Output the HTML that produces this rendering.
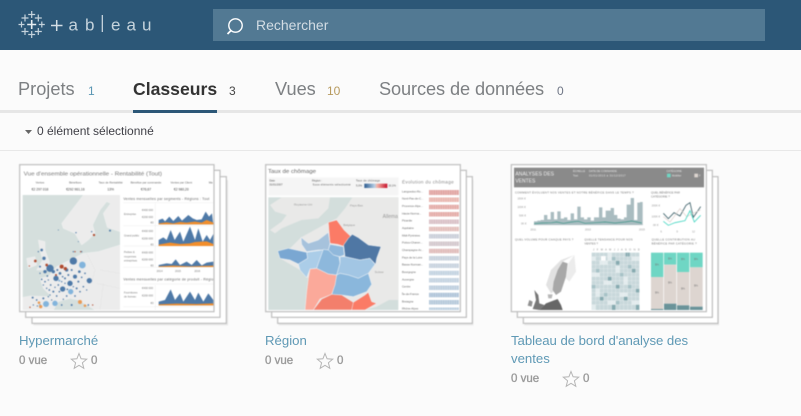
<!DOCTYPE html>
<html lang="fr"><head><meta charset="utf-8"><title>Classeurs</title>
<style>
html,body{margin:0;padding:0;background:#fbfbfb}
body{width:801px;height:416px;position:relative;overflow:hidden;font-family:"Liberation Sans",sans-serif}
.a{position:absolute;white-space:nowrap}
.tab{font-size:18.2px;color:#7d8083;top:78px;line-height:22px}
.n{font-size:12px;top:84px;line-height:14px}
.title{font-size:13.2px;color:#5f99b5;line-height:18px}
.st{font-size:11.5px;color:#9a9a9a;line-height:14px;-webkit-text-stroke:.35px #9a9a9a}
svg.th{position:absolute;top:160px;width:225px;height:170px;filter:blur(.4px)}
svg text{font-family:"Liberation Sans",sans-serif}
.c{fill:#fff;stroke:#bdbdbd;stroke-width:3.5}
.s{fill:#e8e8e8}
</style></head><body>
<div class="a" style="left:0;top:0;width:801px;height:50px;background:#2c5777"></div>
<svg class="a" style="left:0;top:0" width="170" height="50" viewBox="0 0 170 50">
<g stroke="#c5d3dc" fill="none" stroke-width="1.2">
<path d="M31.7 20v9M27.2 24.5h9" stroke="#e6edf1" stroke-width="1.6"/>
<path d="M31.7 11v7M28.2 14.5h7M31.7 31v7M28.2 34.5h7"/>
<path d="M25 14.500v7M21.5 18h7M38.300 14.500v7M34.800 18h7M25 28v7M21.5 31.500h7M38.300 28v7M34.800 31.500h7"/>
<path d="M21.500 21.500v6M18.500 24.500h6M41.800 21.500v6M38.800 24.500h6"/>
</g>
<path d="M51 25.500h11.500M56.700 20v11" stroke="#d3dee5" stroke-width="1.500" fill="none"/>
<path d="M102.300 15v17" stroke="#d3dee5" stroke-width="1.200" fill="none"/>
<g fill="#c5d3dc" font-size="17">
<text x="68.500" y="30.500">a</text><text x="85" y="30.500">b</text><text x="111" y="30.500">e</text><text x="126.500" y="30.500">a</text><text x="142" y="30.500">u</text>
</g></svg>
<div class="a" style="left:213px;top:9px;width:552px;height:32px;background:#527993"></div>
<svg class="a" style="left:225px;top:15px" width="22" height="22" viewBox="0 0 22 22" fill="none" stroke="#fff"><circle cx="10.500" cy="10.500" r="6.700" stroke-width="1.400"/><path d="M6 15.500L2.500 19" stroke-width="1.800"/></svg>
<div class="a" style="left:256px;top:16px;font-size:14px;line-height:18px;color:#d3dde4">Rechercher</div>

<div class="a tab" style="left:18px">Projets</div><div class="a n" style="left:88px;color:#5a96b3">1</div>
<div class="a tab" style="left:133px;color:#333;font-weight:700;font-size:17.6px">Classeurs</div><div class="a n" style="left:229px;color:#444">3</div>
<div class="a tab" style="left:275px">Vues</div><div class="a n" style="left:327px;color:#b79a5e">10</div>
<div class="a tab" style="left:379px;letter-spacing:-.1px">Sources de données</div><div class="a n" style="left:557px;color:#6e7585">0</div>
<div class="a" style="left:0;top:110px;width:801px;height:3px;background:#e6e6e6"></div>
<div class="a" style="left:133px;top:110px;width:84px;height:3px;background:#2c5777"></div>
<svg class="a" style="left:25px;top:129px" width="8" height="6"><path d="M0 1h7L3.500 5z" fill="#666"/></svg>
<div class="a" style="left:37px;top:123px;font-size:12px;line-height:16px;color:#3f3f46">0 élément sélectionné</div>
<div class="a" style="left:0;top:150px;width:801px;height:1px;background:#e8e8e8"></div>

<!-- Thumb 1 -->
<svg class="th" style="left:10px" viewBox="0 0 675 510">
<rect class="s" x="70" y="60" width="584" height="436"/><rect class="c" x="66" y="50" width="583" height="440"/>
<rect class="c" x="47" y="31" width="583" height="441"/><rect class="c" x="29" y="14" width="583" height="441"/>
<text x="41" y="47" font-size="17" fill="#777" textLength="415" lengthAdjust="spacingAndGlyphs">Vue d'ensemble opérationnelle - Rentabilité (Tout)</text>
<g font-size="8.500" fill="#666" text-anchor="middle"><text x="90" y="71">Ventes</text><text x="196" y="71">Bénéfices</text><text x="302" y="71">Taux de Rentabilité</text><text x="408" y="71">Bénéfice par commande</text><text x="514" y="71">Ventes par Client</text><text x="602" y="71">Ma</text></g>
<g font-size="10" fill="#444" text-anchor="middle"><text x="90" y="92">€2 297 018</text><text x="196" y="92">€292 961,16</text><text x="302" y="92">13%</text><text x="408" y="92">€76,67</text><text x="514" y="92">€2 980,20</text></g>
<g transform="translate(30 90)">
<rect x="8" y="15" width="292" height="345" fill="#d5dfdd"/>
<g fill="#ececec" stroke="#f8f8f8" stroke-width="1">
<path d="M190 15H300V125L262 112 250 70 272 40 260 35 240 60 218 105 225 130 205 150 185 165 165 130 130 115 125 100z"/>
<path d="M55 150L75 155 75 180 88 215 85 240 50 240 68 210 60 180z"/>
<path d="M20 205L45 200 50 225 25 235z"/>
<path d="M300 165L235 185 190 190 170 200 140 215 110 230 85 260 60 265 70 295 95 320 30 318 8 322V360H100L115 335 150 325 175 330 200 345 225 360H300z"/>
</g>
<path d="M240 240L300 250M230 280L300 295M200 190L225 240 215 280M250 280L240 360" stroke="#dedede" fill="none"/>
<g fill="#4e79a7">
<circle cx="90" cy="235" r="11"/><circle cx="160" cy="213" r="11"/><circle cx="108" cy="265" r="8"/><circle cx="208" cy="272" r="8"/><circle cx="165" cy="260" r="6"/><circle cx="150" cy="280" r="8"/><circle cx="128" cy="297" r="8"/><circle cx="65" cy="180" r="4"/><circle cx="72" cy="205" r="5"/><circle cx="270" cy="122" r="3"/><circle cx="75" cy="245" r="5"/><circle cx="140" cy="240" r="5"/><circle cx="120" cy="250" r="4"/><circle cx="178" cy="245" r="4"/><circle cx="100" cy="245" r="5"/><circle cx="60" cy="230" r="3"/><circle cx="38" cy="323" r="3"/>
<circle cx="65" cy="268" r="2.500"/><circle cx="75" cy="275" r="2.500"/><circle cx="85" cy="270" r="2"/><circle cx="92" cy="285" r="2.500"/><circle cx="80" cy="295" r="2"/><circle cx="100" cy="305" r="3"/><circle cx="115" cy="285" r="2.500"/><circle cx="135" cy="265" r="3"/><circle cx="145" cy="255" r="3"/><circle cx="125" cy="275" r="2"/><circle cx="175" cy="275" r="3"/><circle cx="190" cy="290" r="2.500"/><circle cx="170" cy="295" r="3"/><circle cx="185" cy="262" r="2.500"/><circle cx="110" cy="318" r="2.500"/><circle cx="85" cy="320" r="2"/><circle cx="140" cy="318" r="2.500"/><circle cx="165" cy="318" r="2.500"/><circle cx="70" cy="325" r="3"/><circle cx="50" cy="330" r="2.500"/><circle cx="95" cy="330" r="2"/><circle cx="155" cy="345" r="3"/><circle cx="205" cy="345" r="2.500"/><circle cx="130" cy="328" r="2"/><circle cx="40" cy="345" r="2"/><circle cx="115" cy="120" r="1.500"/><circle cx="168" cy="128" r="2"/><circle cx="215" cy="125" r="2"/><circle cx="160" cy="185" r="2"/><circle cx="185" cy="185" r="2"/><circle cx="175" cy="155" r="1.500"/><circle cx="55" cy="185" r="2"/><circle cx="200" cy="300" r="2"/>
<circle cx="70" cy="285" r="2"/><circle cx="88" cy="300" r="2.500"/><circle cx="105" cy="292" r="2"/><circle cx="118" cy="305" r="2.500"/><circle cx="142" cy="298" r="2.500"/><circle cx="160" cy="290" r="2"/><circle cx="180" cy="305" r="2.500"/><circle cx="135" cy="280" r="2"/><circle cx="128" cy="260" r="2.500"/><circle cx="155" cy="240" r="3"/><circle cx="112" cy="240" r="3"/><circle cx="82" cy="258" r="2.500"/><circle cx="60" cy="250" r="2"/><circle cx="195" cy="250" r="2.500"/><circle cx="125" cy="345" r="2.500"/><circle cx="52" cy="348" r="2"/><circle cx="90" cy="315" r="2"/></g>
<g fill="#82b4dc"><circle cx="187" cy="225" r="10"/><circle cx="152" cy="305" r="8"/><circle cx="105" cy="340" r="8"/><circle cx="78" cy="342" r="9"/><circle cx="118" cy="272" r="3"/><circle cx="60" cy="345" r="3"/></g>
<g fill="#b04a2e"><circle cx="125" cy="230" r="6"/><circle cx="136" cy="236" r="5"/><circle cx="80" cy="225" r="4"/><circle cx="46" cy="213" r="4"/><circle cx="222" cy="135" r="3.500"/><circle cx="30" cy="352" r="2"/><circle cx="108" cy="255" r="3"/><circle cx="165" cy="185" r="2"/><circle cx="182" cy="185" r="2"/><circle cx="28" cy="228" r="2"/><circle cx="218" cy="345" r="2"/></g>
<g fill="#e99a55"><circle cx="180" cy="336" r="6"/><circle cx="57" cy="338" r="4"/><circle cx="62" cy="350" r="5"/><circle cx="195" cy="347" r="4"/></g>
</g>
<g font-size="10.500" fill="#666"><text x="340" y="120" textLength="258">Ventes mensuelles par segments - Régions : Tout</text><text x="340" y="361" textLength="270">Ventes mensuelles par catégorie de produit - Régio</text></g>
<g stroke="#e2e2e2"><path d="M340 128H610M340 197H610M340 258H610M340 322H610M340 372H610M340 440H610" fill="none"/><path d="M436 130V320M436 375V450" fill="none"/></g>
<g font-size="8" fill="#777"><text x="342" y="165">Entreprise</text><text x="342" y="229">Grand public</text><text x="342" y="279">Petites &amp;</text><text x="342" y="292">moyennes</text><text x="342" y="304">entreprises</text><text x="342" y="400">Fournitures</text><text x="342" y="412">de bureau</text>
<text x="396" y="153">€400 000</text><text x="396" y="174">€200 000</text><text x="422" y="191">€0</text><text x="396" y="216">€400 000</text><text x="396" y="238">€200 000</text><text x="422" y="257">€0</text><text x="396" y="280">€400 000</text><text x="396" y="302">€200 000</text><text x="422" y="320">€0</text><text x="396" y="387">€400 000</text><text x="396" y="409">€200 000</text><text x="422" y="432">€0</text><text x="440" y="336">2014</text><text x="495" y="336">2015</text><text x="553" y="336">2016</text></g>
<g fill="#4e79a7">
<path d="M446 193V180L458 176 465 184 478 170 490 183 505 168 516 182 535 165 548 175 560 180 575 178 587 155 597 170 606 160 610 193z"/>
<path d="M446 258V240L460 232 470 240 482 210 494 240 510 215 520 245 540 200 555 240 565 205 578 245 590 225 600 240 610 222V258z"/>
<path d="M446 321V315L470 310 485 312 497 298 510 315 530 305 545 315 560 300 575 316 590 308 610 305V321z"/>
<path d="M446 436V425L465 420 482 388 495 420 510 400 520 425 540 395 555 420 565 398 580 425 595 400 610 420V436z"/></g>
<g fill="#f28e2b">
<path d="M446 193V190L470 187 490 190 510 186 530 188 555 185 575 188 590 180 610 188V193z"/>
<path d="M446 258V254L480 248 510 252 540 250 555 246 590 244 610 252V258z"/>
<path d="M446 321V319L490 317 540 319 610 317V321z"/>
<path d="M446 436V433L500 431 560 432 610 430V436z"/></g>
</svg>

<!-- Thumb 2 -->
<svg class="th" style="left:260px" viewBox="0 0 675 510">
<rect class="s" x="56" y="60" width="584" height="436"/><rect class="c" x="53" y="50" width="584" height="440"/>
<rect class="c" x="35" y="31" width="584" height="441"/><rect class="c" x="17" y="14" width="584" height="441"/>
<text x="24" y="39" font-size="17" fill="#666" textLength="144" lengthAdjust="spacingAndGlyphs">Taux de chômage</text>
<rect x="25" y="52" width="390" height="54" fill="#f5f5f5"/>
<g font-size="8" fill="#555"><text x="28" y="64">Date</text><text x="28" y="76">01/01/2007</text><text x="156" y="64">Région :</text><text x="158" y="76" textLength="114">Sous-éléments sélectionné</text><text x="288" y="65" textLength="72">Taux de chômage</text><text x="288" y="80">5,0%</text><text x="385" y="80">10,1%</text></g>
<defs><linearGradient id="g"><stop offset="0" stop-color="#2a5a8f"/><stop offset=".45" stop-color="#b8d0e6"/><stop offset=".55" stop-color="#f5b5a8"/><stop offset="1" stop-color="#c5102a"/></linearGradient>
<pattern id="b" width="7" height="14" patternUnits="userSpaceOnUse"><rect width="3" height="14" fill="#fff" fill-opacity=".25"/></pattern></defs>
<rect x="313" y="71" width="69" height="13" fill="url(#g)"/>
<g transform="translate(15 105)">
<rect x="10" y="7" width="390" height="338" fill="#d3dedc"/>
<path d="M262 7H400V315H372L335 335 300 345H120L130 250 105 225 45 190 108 127 190 82 215 70 240 40z" fill="#e9e9e8"/>
<path d="M50 7H195L190 40 160 70 110 75 85 85 50 100 30 115 15 105 50 80 65 60 30 50 15 30z" fill="#e9e9e8"/>
<g font-size="9" fill="#999"><text x="87" y="32">Royaume-Uni</text><text x="255" y="35">Pays-Bas</text><text x="235" y="93">Belgique</text><text x="329" y="234">Suisse</text></g>
<text x="353" y="69" font-size="15" fill="#999">Allema</text>
<g stroke="#f0f4f8" stroke-width="1.500">
<path fill="#fb7b66" d="M190 82L215 75 237 105 258 125 240 155 218 148 195 145z"/>
<path fill="#4f77a4" d="M262 118L280 128 310 150 348 155 335 190 332 208 315 190 285 195 240 185 236 150 250 130z"/>
<path fill="#a6c2dc" d="M108 127L130 145 160 135 190 112 195 145 190 165 160 165 125 170 110 148z"/>
<path fill="#90b8db" d="M195 148L235 155 238 180 225 185 205 180 190 165z"/>
<path fill="#7aa7d2" d="M38 168L70 160 125 172 128 190 100 207 75 195 45 190z"/>
<path fill="#abcde8" d="M100 207L128 190 125 172 175 165 160 205 155 220 135 222 125 248 105 225z"/>
<path fill="#8db8dc" d="M175 163L190 165 205 180 222 185 225 205 215 240 190 237 155 220 160 205z"/>
<path fill="#a2c6e4" d="M225 185L240 185 285 195 315 190 330 208 310 235 280 250 250 240 225 235 215 240 225 205z"/>
<path fill="#8ab7dc" d="M215 240L225 235 250 240 280 250 310 235 320 268 305 290 265 305 230 300 200 300 210 265z"/>
<path fill="#fba99a" d="M135 222L155 220 190 237 215 240 210 270 200 298 165 312 145 345H120L125 290 130 250z"/>
<path fill="#f37f6c" d="M145 345L170 312 200 298 230 300 265 322 265 345z"/>
<path fill="#fb7b66" d="M260 345L265 322 300 300 310 292 320 320 335 325 300 345z"/>
</g></g>
<text x="426" y="71" font-size="14" fill="#888" textLength="155">Évolution du chômage</text>
<g font-size="8.500" fill="#666"><text x="426" y="97">Languedoc-Ro...</text><text x="426" y="119">Nord-Pas-de-C...</text><text x="426" y="141">Provence-Alpe...</text><text x="426" y="163">Haute-Norma...</text><text x="426" y="185">Picardie</text><text x="426" y="207">Aquitaine</text><text x="426" y="229">Midi-Pyrénées</text><text x="426" y="251">Poitou-Charen...</text><text x="426" y="273">Champagne-Ar...</text><text x="426" y="295">Pays de la Loire</text><text x="426" y="317">Basse-Norman...</text><text x="426" y="339">Bourgogne</text><text x="426" y="361">Auvergne</text><text x="426" y="383">Centre</text><text x="426" y="405">Île-de-France</text><text x="426" y="427">Bretagne</text><text x="426" y="449">Rhône-Alpes</text></g>
<g><rect x="507" y="90" width="90" height="15" fill="#e0a3a0"/><rect x="507" y="112" width="90" height="14" fill="#e8b5ae"/><rect x="507" y="134" width="90" height="14" fill="#e3a9a5"/><rect x="507" y="156" width="90" height="14" fill="#e3aaa6"/><rect x="507" y="178" width="90" height="14" fill="#d8bfc5"/><rect x="507" y="200" width="90" height="14" fill="#e2bdb9"/><rect x="507" y="222" width="90" height="14" fill="#c9ced8"/><rect x="507" y="244" width="90" height="14" fill="#d3c7cc"/><rect x="507" y="266" width="90" height="14" fill="#dfbab8"/><rect x="507" y="288" width="90" height="14" fill="#c6d0dc"/><rect x="507" y="310" width="90" height="14" fill="#c7d2de"/><rect x="507" y="332" width="90" height="14" fill="#c2d2e0"/><rect x="507" y="354" width="90" height="14" fill="#c3d2e0"/><rect x="507" y="376" width="90" height="14" fill="#bdcede"/><rect x="507" y="398" width="90" height="14" fill="#aec3d8"/><rect x="507" y="420" width="90" height="14" fill="#b4c8da"/><rect x="507" y="442" width="90" height="8" fill="#bccfdf"/>
<path d="M507 105h90v7h-90zM507 126h90v8h-90zM507 148h90v8h-90zM507 170h90v8h-90zM507 192h90v8h-90zM507 214h90v8h-90zM507 236h90v8h-90zM507 258h90v8h-90zM507 280h90v8h-90zM507 302h90v8h-90zM507 324h90v8h-90zM507 346h90v8h-90zM507 368h90v8h-90zM507 390h90v8h-90zM507 412h90v8h-90zM507 434h90v8h-90z" fill="#fff"/>
<rect x="507" y="90" width="90" height="360" fill="url(#b)"/></g>
</svg>

<!-- Thumb 3 -->
<svg class="th" style="left:505px" viewBox="0 0 675 510">
<rect class="s" x="58" y="60" width="584" height="436"/><rect class="c" x="55" y="50" width="584" height="440"/>
<rect class="c" x="37" y="31" width="585" height="441"/><rect class="c" x="19" y="14" width="585" height="441"/>
<rect x="27" y="23" width="570" height="59" fill="#8a8a8a"/>
<g fill="#f2f2f2" font-size="15"><text x="31" y="47" textLength="116">ANALYSES DES</text><text x="31" y="68">VENTES</text></g>
<g fill="#e8e8e8" font-size="8"><text x="204" y="36">ÉCHELLE</text><text x="204" y="49">Tout</text><text x="252" y="36">DATE DE COMMANDE</text><text x="252" y="49" textLength="110">01/01/2013 à 31/12/2017</text><text x="484" y="36">CATÉGORIE</text><text x="501" y="50">Mobilier</text><text x="582" y="49">F</text></g>
<rect x="486" y="41" width="11" height="11" fill="#6fd6c4"/><rect x="568" y="41" width="11" height="11" fill="#ddd5d0"/>
<g font-size="8.500" fill="#777"><text x="30" y="100" textLength="356">COMMENT ÉVOLUENT NOS VENTES ET NOTRE BÉNÉFICE DANS LE TEMPS ?</text><text x="438" y="100">QUEL BÉNÉFICE PAR</text><text x="438" y="112">CATÉGORIE ?</text><text x="30" y="241" textLength="175">QUEL VOLUME POUR CHAQUE PAYS ?</text><text x="238" y="241" textLength="145">QUELLE TENDANCE POUR NOS</text><text x="238" y="253">VENTES ?</text><text x="440" y="241" textLength="130">QUELLE CONTRIBUTION AU</text><text x="440" y="253" textLength="135">BÉNÉFICE PAR CATÉGORIE ?</text></g>
<g font-size="8" fill="#999"><text x="37" y="118">150K €</text><text x="37" y="144">100K €</text><text x="42" y="169">50K €</text><text x="48" y="194">0K €</text><text x="76" y="212">2011</text><text x="240" y="212">2013</text><text x="402" y="212">2015</text><text x="440" y="139">200K €</text><text x="440" y="172">100K €</text><text x="444" y="198">0K €</text><text x="466" y="218">6</text><text x="514" y="218">9</text><text x="561" y="218">12</text></g>
<path d="M85 195H415" stroke="#ddd"/>
<path fill="#a9bcc0" d="M87 195V184H97V182H107V180H117V165H127V178H137V156H147V178H157V154H167V176H177V172H187V180H197V160H207V178H217V140H227V172H237V178H247V172H257V182H267V172H282V142H292V172H302V152H317V144H327V165H337V176H347V178H357V172H365V134H377V114H387V180H397V128H405V126H413V195z"/>
<path fill="none" stroke="#3f9688" stroke-width="2" d="M87 191L110 189 140 188 155 186 175 190 200 186 220 184 240 190 270 188 300 186 330 189 360 186 380 183 410 189"/>
<path fill="none" stroke="#3b5f68" stroke-width="2.500" d="M475 160L490 176 507 158 525 168 543 136 555 128 565 172 587 140"/>
<path fill="none" stroke="#ddd0ca" stroke-width="2" d="M475 170L495 186 525 146 545 170 568 158 587 150"/>
<path fill="none" stroke="#45d6c2" stroke-width="2.500" d="M475 184L490 196 510 188 540 182 555 152 568 186 587 166"/>
<g font-size="7.500" fill="#888"><text x="264" y="272" textLength="140">J F M A M J J A S O N D</text></g>
<g transform="translate(18 225)">
<path fill="#ececec" d="M190 60L195 110 175 140 165 130 172 85z"/>
<path fill="#e2e2e2" d="M190 60L150 75 120 105 105 150 120 175 135 165 128 140 140 105 155 80z"/>
<path fill="#a8a8a8" d="M155 80L170 85 165 125 150 170 135 180 125 165 128 140 140 105z"/>
<path fill="#b8b8b8" d="M110 178L125 178 122 190 112 190z"/>
<path fill="#777" d="M70 165L82 180 85 205 100 210 85 225 65 222 75 195z"/>
<path fill="#909090" d="M55 195L65 200 62 215 50 212z"/>
<path fill="#666" d="M85 225L105 205 140 192 150 210 155 225z"/>
</g>
<rect x="260" y="278" width="143" height="172" fill="#c8d8db"/>
<g fill="#e3ecee"><rect x="260" y="290" width="12" height="12"/><rect x="308" y="278" width="12" height="24"/><rect x="284" y="302" width="24" height="12"/><rect x="332" y="314" width="12" height="24"/><rect x="380" y="290" width="23" height="12"/><rect x="260" y="338" width="24" height="12"/><rect x="356" y="350" width="12" height="24"/><rect x="296" y="362" width="24" height="12"/><rect x="272" y="386" width="12" height="24"/><rect x="344" y="398" width="24" height="12"/><rect x="380" y="422" width="23" height="12"/><rect x="308" y="422" width="24" height="12"/><rect x="260" y="434" width="12" height="16"/></g>
<rect x="288" y="288" width="14" height="14" fill="#fff"/>
<g fill="#86aab0"><rect x="332" y="302" width="12" height="14"/><rect x="362" y="278" width="12" height="12"/><rect x="380" y="326" width="12" height="12"/><rect x="332" y="374" width="12" height="12"/><rect x="392" y="386" width="11" height="12"/><rect x="356" y="410" width="12" height="12"/><rect x="284" y="410" width="12" height="12"/><rect x="308" y="350" width="12" height="12"/><rect x="392" y="434" width="11" height="16"/><rect x="320" y="434" width="12" height="16"/></g>
<g fill="#a7c2c7"><rect x="272" y="326" width="12" height="12"/><rect x="320" y="290" width="12" height="12"/><rect x="368" y="314" width="12" height="12"/><rect x="260" y="374" width="12" height="12"/><rect x="344" y="338" width="12" height="12"/><rect x="296" y="398" width="12" height="12"/><rect x="368" y="374" width="12" height="12"/><rect x="332" y="422" width="12" height="12"/></g>
<path d="M272 278V450M284 278V450M296 278V450M308 278V450M320 278V450M332 278V450M344 278V450M356 278V450M368 278V450M380 278V450M392 278V450M260 290H403M260 302H403M260 314H403M260 326H403M260 338H403M260 350H403M260 362H403M260 374H403M260 386H403M260 398H403M260 410H403M260 422H403M260 434H403" stroke="#f4f6f6" stroke-width=".8" fill="none"/>
<g fill="#6fd6c4"><rect x="438" y="278" width="37" height="73"/><rect x="477" y="278" width="37" height="36"/><rect x="516" y="278" width="37" height="58"/><rect x="555" y="278" width="38" height="44"/></g>
<g fill="#ddd5d0"><rect x="438" y="351" width="37" height="96"/><rect x="477" y="314" width="37" height="117"/><rect x="516" y="336" width="37" height="100"/><rect x="555" y="322" width="38" height="118"/></g>
<g fill="#6a9399"><rect x="438" y="447" width="37" height="3"/><rect x="477" y="431" width="37" height="19"/><rect x="516" y="436" width="37" height="14"/><rect x="555" y="440" width="38" height="10"/></g>
<g font-size="8" fill="#777" text-anchor="middle"><text x="456" y="316">$%</text><text x="495" y="298">$%</text><text x="534" y="300">$%</text><text x="573" y="300">$%</text><text x="456" y="400">$%</text><text x="495" y="370">$%</text><text x="534" y="388">$%</text><text x="573" y="380">$%</text></g>
</svg>

<div class="a title" style="left:19px;top:332px">Hypermarché</div>
<div class="a st" style="left:19px;top:354px">0 vue</div>
<svg class="a" style="left:70px;top:352px" width="18" height="18" viewBox="0 0 18 18"><path d="M9 1.500L11.100 6.800 16.700 7.200 12.400 10.800 13.800 16.300 9 13.300 4.200 16.300 5.600 10.800 1.300 7.200 6.900 6.800z" fill="none" stroke="#b5b5b5"/></svg>
<div class="a st" style="left:91px;top:354px">0</div>

<div class="a title" style="left:265px;top:332px">Région</div>
<div class="a st" style="left:265px;top:354px">0 vue</div>
<svg class="a" style="left:316px;top:352px" width="18" height="18" viewBox="0 0 18 18"><path d="M9 1.500L11.100 6.800 16.700 7.200 12.400 10.800 13.800 16.300 9 13.300 4.200 16.300 5.600 10.800 1.300 7.200 6.900 6.800z" fill="none" stroke="#b5b5b5"/></svg>
<div class="a st" style="left:337px;top:354px">0</div>

<div class="a title" style="left:511px;top:332px;letter-spacing:-.05px">Tableau de bord d'analyse des</div>
<div class="a title" style="left:511px;top:350px">ventes</div>
<div class="a st" style="left:511px;top:372px">0 vue</div>
<svg class="a" style="left:562px;top:370px" width="18" height="18" viewBox="0 0 18 18"><path d="M9 1.500L11.100 6.800 16.700 7.200 12.400 10.800 13.800 16.300 9 13.300 4.200 16.300 5.600 10.800 1.300 7.200 6.900 6.800z" fill="none" stroke="#b5b5b5"/></svg>
<div class="a st" style="left:583px;top:372px">0</div>
</body></html>
